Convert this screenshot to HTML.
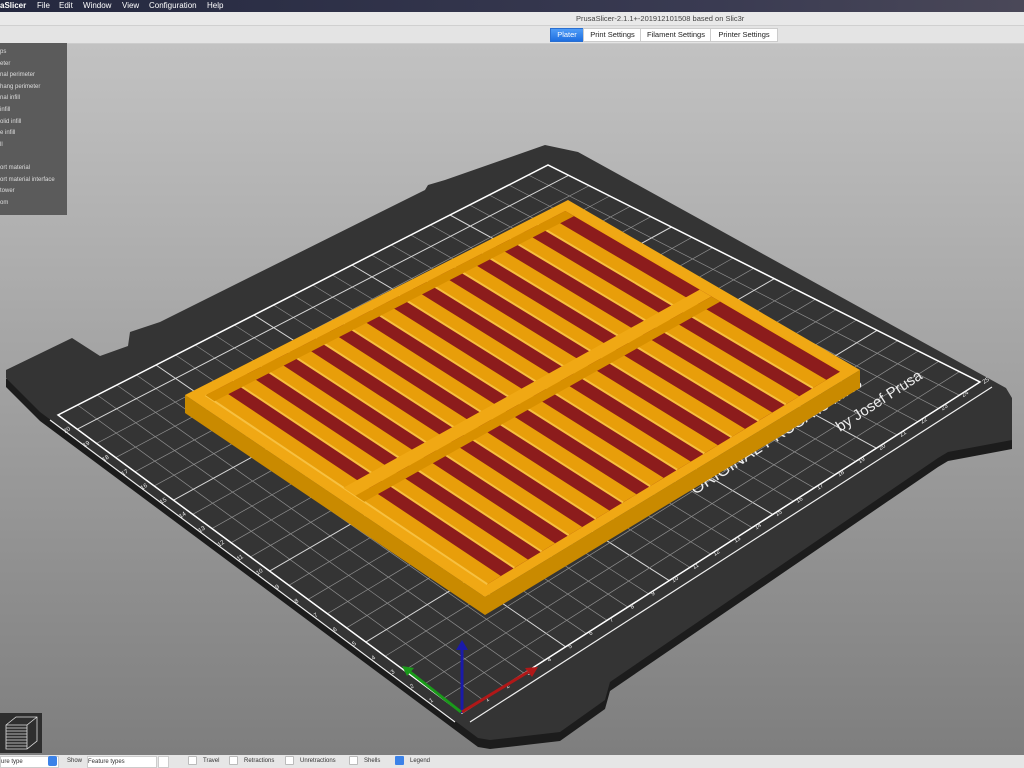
<!DOCTYPE html>
<html><head><meta charset="utf-8"><style>
html,body{margin:0;padding:0;width:1024px;height:768px;overflow:hidden;font-family:"Liberation Sans",sans-serif}
#bg{position:absolute;left:0;top:43px;width:1024px;height:712px;background:linear-gradient(#c2c2c2,#7e7e7e)}
#menu{position:absolute;left:0;top:0;width:1024px;height:12px;background:linear-gradient(90deg,#24283f,#3a3b52 70%,#4a4858);color:#fff;font-size:8px;line-height:12px}
#menu span{position:absolute;top:0}
#title{position:absolute;left:0;top:12px;width:1024px;height:13px;background:#e9e9e9;border-bottom:1px solid #d0d0d0;font-size:7.5px;color:#444;line-height:13px}
#tabs{position:absolute;left:0;top:26px;width:1024px;height:17px;background:#e4e4e4;border-bottom:1px solid #ccc}
.tab{position:absolute;top:2px;height:12px;font-size:7.5px;line-height:12px;background:#fff;color:#222;text-align:center;border:1px solid #ccc}
#legend{position:absolute;left:0;top:43px;width:67px;height:172px;background:#5b5b5b;color:#ddd;font-size:6px}
#legend div{position:absolute;left:0}
#bottom{position:absolute;left:0;top:755px;width:1024px;height:13px;background:#e6e6e6;font-size:6px;color:#333;line-height:13px}
#bottom span{position:absolute;top:0}
.cb{display:inline-block;width:7px;height:7px;background:#fff;border:1px solid #bbb;border-radius:1px;vertical-align:middle;margin-right:6px}
svg{position:absolute;left:0;top:0}
</style></head><body>
<div id="bg"></div>
<svg id="s" width="1024" height="768" viewBox="0 0 1024 768"></svg>
<div id="menu"><span style="left:0;font-weight:bold">aSlicer</span><span style="left:37px">File</span><span style="left:59px">Edit</span><span style="left:83px">Window</span><span style="left:122px">View</span><span style="left:149px">Configuration</span><span style="left:207px">Help</span></div>
<div id="title"><span style="position:absolute;left:576px">PrusaSlicer-2.1.1+-201912101508 based on Slic3r</span></div>
<div id="tabs">
<div class="tab" style="left:550px;width:32px;background:linear-gradient(#4f9cf7,#1f6fe0);color:#fff;border-color:#2a6fd0">Plater</div>
<div class="tab" style="left:583px;width:57px">Print Settings</div>
<div class="tab" style="left:640px;width:70px">Filament Settings</div>
<div class="tab" style="left:710px;width:66px">Printer Settings</div>
</div>
<div id="legend">
<div style="top:6px">ps</div><div style="top:18px">eter</div><div style="top:29px">nal perimeter</div><div style="top:41px">hang perimeter</div><div style="top:52px">nal infill</div><div style="top:64px">infill</div><div style="top:76px">olid infill</div><div style="top:87px">e infill</div><div style="top:99px">ll</div><div style="top:122px">ort material</div><div style="top:134px">ort material interface</div><div style="top:145px"> tower</div><div style="top:157px">om</div>
</div>
<div style="position:absolute;left:0;top:713px;width:42px;height:40px;background:#2e2e2e">
<svg width="42" height="40" style="position:absolute;left:0;top:0"><g stroke="#ddd" fill="none" stroke-width="0.8"><path d="M6 12 L16 4 L37 4 L37 28 L27 36 L6 36 Z M6 12 L27 12 L37 4 M27 12 L27 36"/><path d="M6 15h21M6 18h21M6 21h21M6 24h21M6 27h21M6 30h21M6 33h21"/></g></svg></div>
<div id="bottom">
<span style="left:0;width:57px;height:10px;top:1px;background:#fff;border:1px solid #ccc;line-height:10px">ure type</span>
<span style="left:48px;top:1px;width:9px;height:10px;background:#3b82e8;border-radius:2px"></span>
<span style="left:67px">Show</span>
<span style="left:87px;top:1px;width:68px;height:10px;background:#fff;border:1px solid #ccc;line-height:10px">Feature types</span>
<span style="left:158px;top:1px;width:9px;height:10px;background:#fff;border:1px solid #ccc"></span>
<span style="left:188px"><i class="cb"></i>Travel</span>
<span style="left:229px"><i class="cb"></i>Retractions</span>
<span style="left:285px"><i class="cb"></i>Unretractions</span>
<span style="left:349px"><i class="cb"></i>Shells</span>
<span style="left:395px"><i class="cb" style="background:#3b82e8;border-color:#3b82e8"></i>Legend</span>
</div>
<script>
var s=document.getElementById('s'),h='';
function P(a){return a.map(function(p){return p[0].toFixed(1)+','+p[1].toFixed(1)}).join(' ')}
var bed=[[545,145],[578,152],[1006,388],[1012,398],[1012,440],[948,452],[938,458],[610,682],[605,700],[560,732],[490,740],[478,738],[40,412],[6,378],[6,370],[72,338],[100,356],[128,346],[130,332],[160,322],[425,190],[428,185],[445,180]];
var under=bed.map(function(p){return [p[0],p[1]+9]});
h+='<polygon points="'+P(under)+'" fill="#1c1c1c"/>';
h+='<polygon points="'+P(bed)+'" fill="#343434"/>';
var O=[462,713],X=[980,382],Y=[58,415],F=[548,165];
function G(a,b){return [O[0]*(1-a)*(1-b)+X[0]*a*(1-b)+Y[0]*(1-a)*b+F[0]*a*b,O[1]*(1-a)*(1-b)+X[1]*a*(1-b)+Y[1]*(1-a)*b+F[1]*a*b]}
for(var i=0;i<=25;i++){var a=G(i/25,0),b=G(i/25,1);h+='<line x1="'+a[0]+'" y1="'+a[1]+'" x2="'+b[0]+'" y2="'+b[1]+'" stroke="'+(i%5==0?'#d8d8d8':'#8e8e8e')+'" stroke-width="'+(i%5==0?1:0.7)+'"/>';}
for(var j=0;j<=21;j++){var a=G(0,j/21),b=G(1,j/21);h+='<line x1="'+a[0]+'" y1="'+a[1]+'" x2="'+b[0]+'" y2="'+b[1]+'" stroke="'+(j%5==0?'#d8d8d8':'#8e8e8e')+'" stroke-width="'+(j%5==0?1:0.7)+'"/>';}
h+='<polygon points="'+P([G(0,0),G(1,0),G(1,1),G(0,1)])+'" fill="none" stroke="#fff" stroke-width="1.5"/>';
h+='<line x1="470" y1="722" x2="992" y2="387" stroke="#eee" stroke-width="1.2"/><line x1="455" y1="722" x2="50" y2="420" stroke="#eee" stroke-width="1.2"/>';
for(var i=1;i<=25;i++){var p=G(i/25,0);h+='<text x="'+(p[0]+4)+'" y="'+(p[1]+2)+'" font-size="6" fill="#eee" transform="rotate(-33 '+(p[0]+4)+' '+(p[1]+2)+')">'+i+'</text>';}
for(var j=1;j<=20;j++){var p=G(0,j/21);h+='<text x="'+(p[0]-12)+'" y="'+(p[1]+4)+'" font-size="6" fill="#eee" transform="rotate(-33 '+(p[0]-12)+' '+(p[1]+4)+')">'+j+'</text>';}
h+='<text x="840" y="432" font-size="15" fill="#eee" transform="rotate(-33 840 432)">by Josef Prusa</text>';
h+='<text x="695" y="495" font-size="17" fill="#eee" transform="rotate(-33 695 495)">ORIGINAL PRUSA i3 MK3</text>';
var A=[185,395],B=[568,200],C=[860,370],D=[485,597],H=18;
function Q(u,v){return [A[0]+(B[0]-A[0])*u+(D[0]-A[0])*v+(C[0]-B[0]-D[0]+A[0])*u*v,A[1]+(B[1]-A[1])*u+(D[1]-A[1])*v+(C[1]-B[1]-D[1]+A[1])*u*v]}
function dn(p,k){return [p[0],p[1]+k]}
h+='<polygon points="'+P([A,D,C,dn(C,H),dn(D,H),dn(A,H)])+'" fill="#c98a00"/>';
h+='<polygon points="'+P([A,B,C,D])+'" fill="#f0a814"/>';
var e=0.03;
h+='<polygon points="'+P([Q(e,e),Q(1-e,e),Q(1-e,1-e),Q(e,1-e)])+'" fill="#8c1c1c"/>';
var n=13;
for(var k=0;k<n;k++){var u0=e+(1-2*e)*k/n,w=(1-2*e)/n*0.5;
 h+='<polygon points="'+P([Q(u0,e),Q(u0+w,e),Q(u0+w,1-e),Q(u0,1-e)])+'" fill="#e89e0a"/>';
 h+='<line x1="'+Q(u0,e)[0]+'" y1="'+Q(u0,e)[1]+'" x2="'+Q(u0,1-e)[0]+'" y2="'+Q(u0,1-e)[1]+'" stroke="#f7c040" stroke-width="2"/>';}
h+='<polygon points="'+P([Q(e,0.49),Q(1-e,0.49),Q(1-e,0.53),Q(e,0.53)])+'" fill="#f0a814"/>';
h+='<polygon points="'+P([Q(e,0.53),Q(1-e,0.53),Q(1-e,0.56),Q(e,0.56)])+'" fill="#d89000"/>';
h+='<polygon points="'+P([Q(e,e),Q(1-e,e),Q(1-e,0.06),Q(e,0.06)])+'" fill="#d89000"/>';
h+='<line x1="462" y1="713" x2="462" y2="648" stroke="#1a1aa8" stroke-width="3"/><polygon points="456,650 468,650 462,640" fill="#1a1aa8"/>';
h+='<line x1="462" y1="712" x2="528" y2="672" stroke="#b01818" stroke-width="3"/><polygon points="525,668 532,677 538,667" fill="#b01818"/>';
h+='<line x1="461" y1="712" x2="410" y2="672" stroke="#1a9a1a" stroke-width="3"/><polygon points="407,676 414,668 402,666" fill="#1a9a1a"/>';
s.innerHTML=h;
</script>
</body></html>
